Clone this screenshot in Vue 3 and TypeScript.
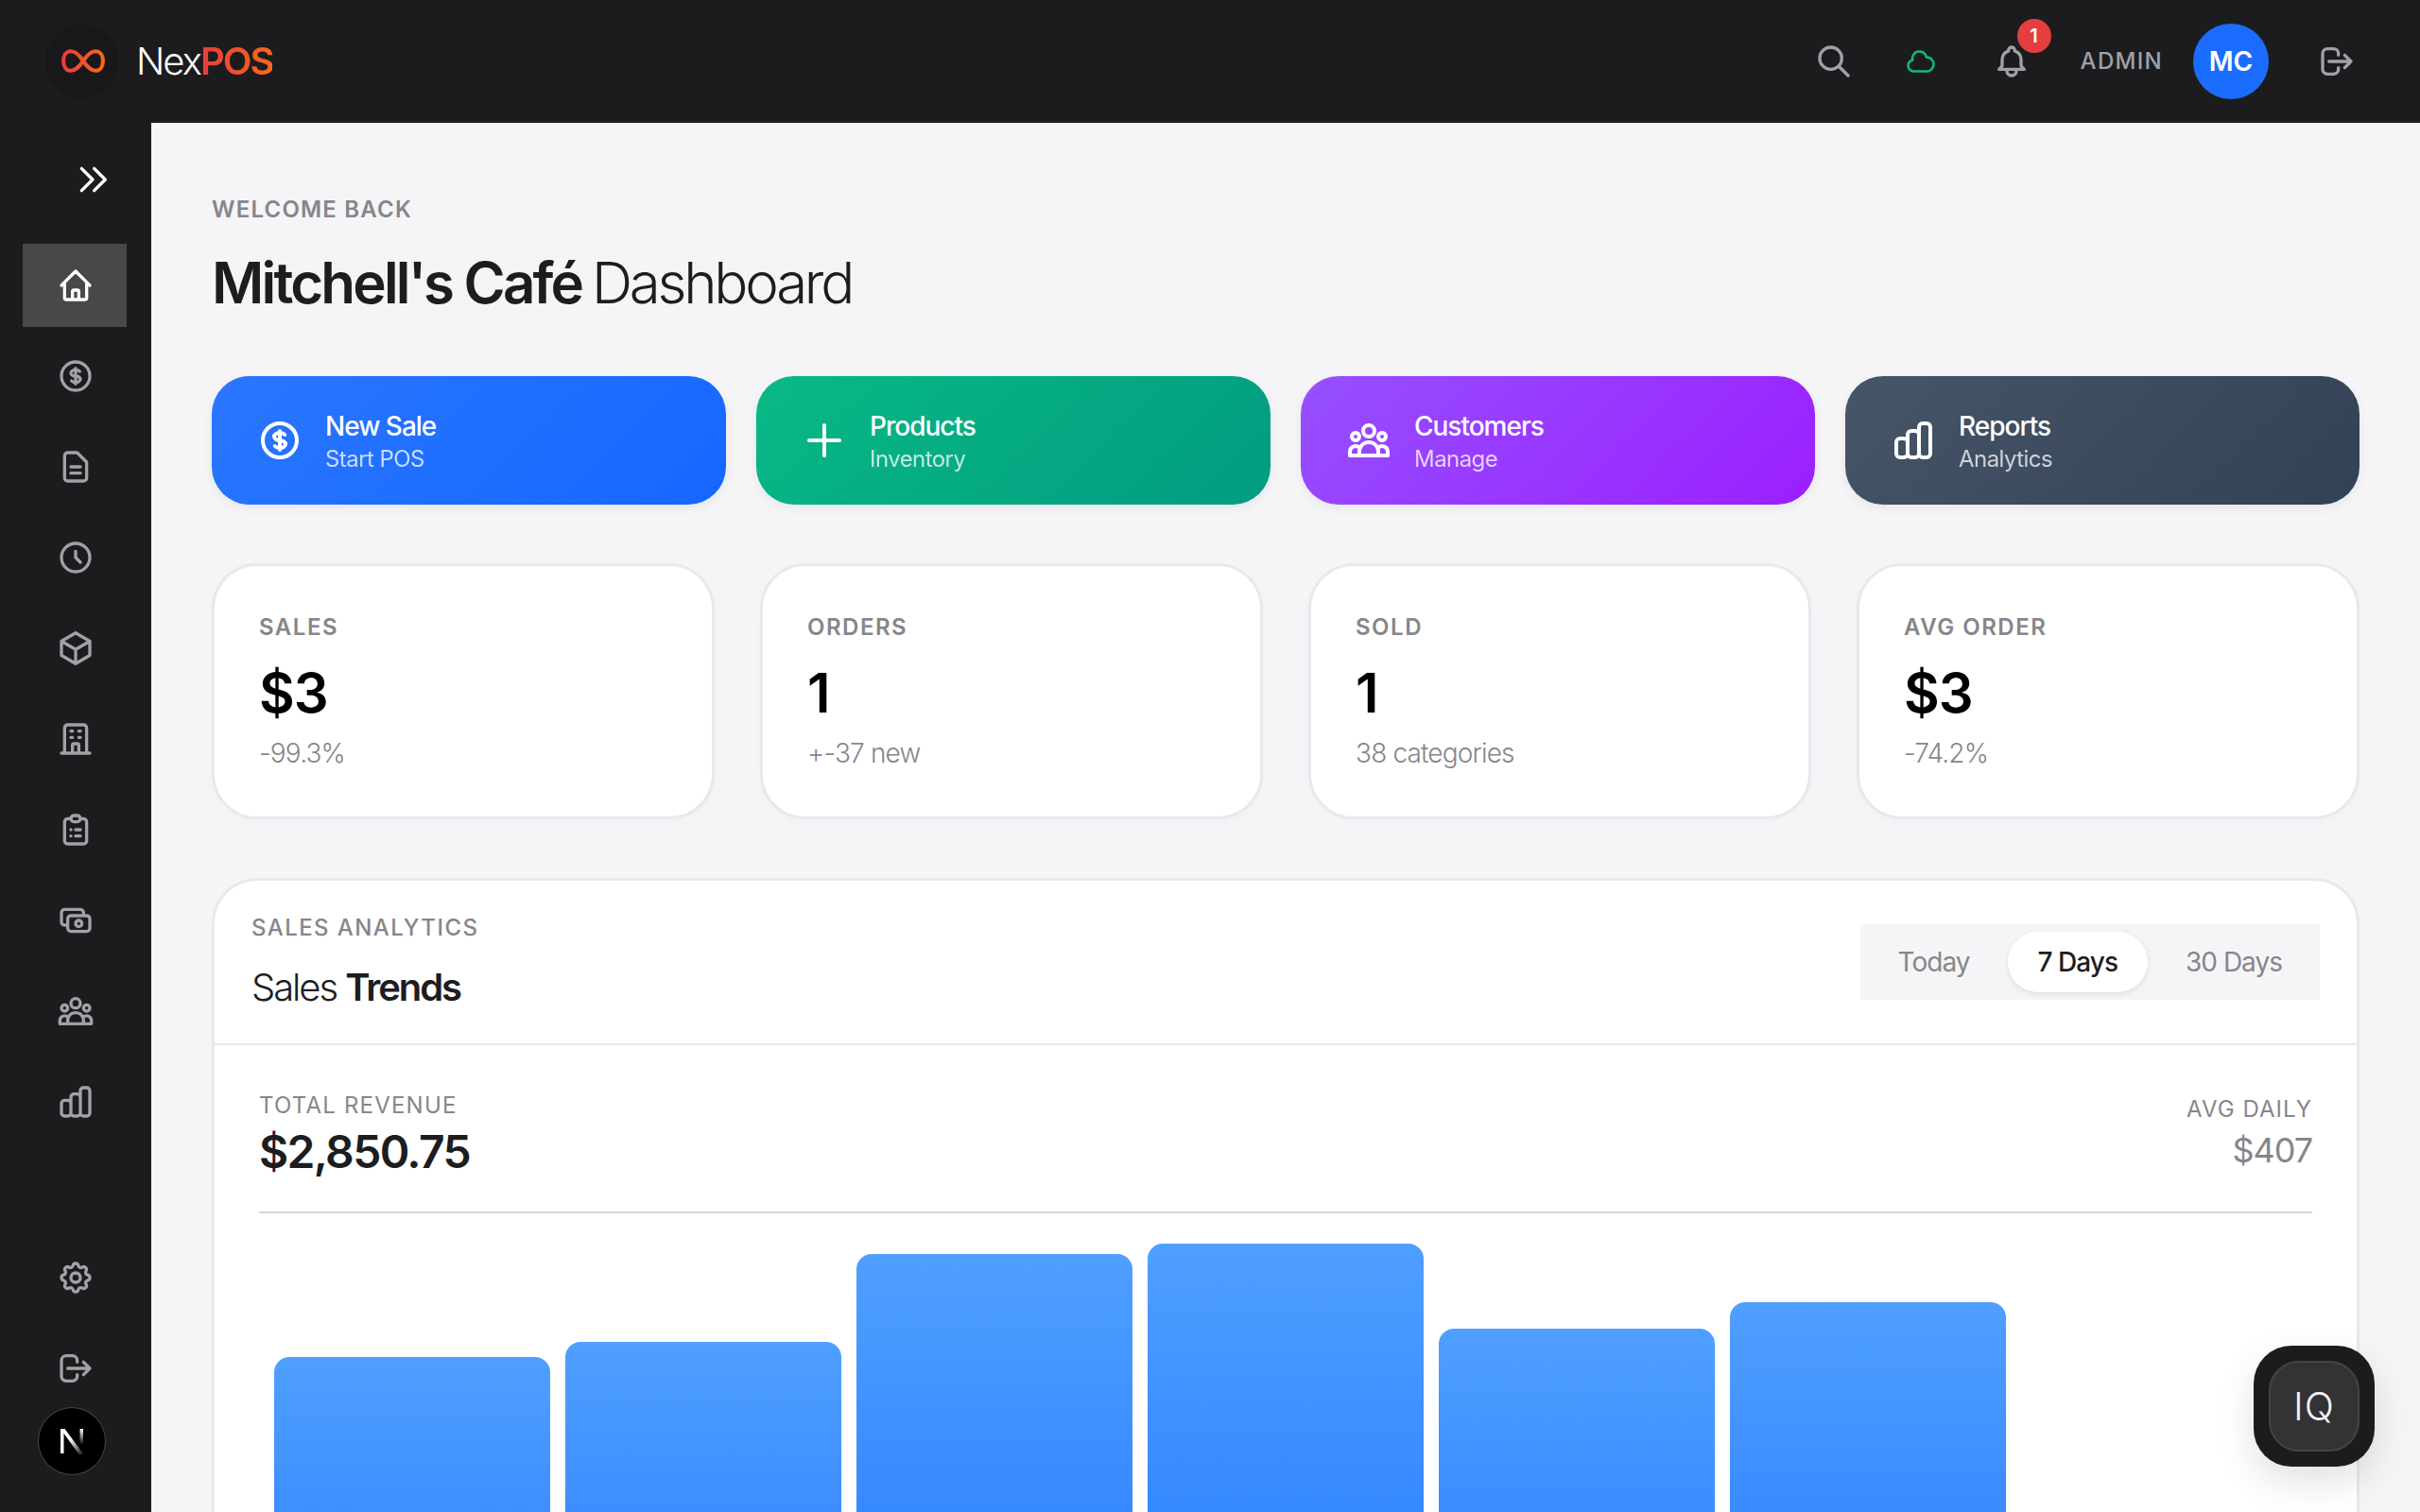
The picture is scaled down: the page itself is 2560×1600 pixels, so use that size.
<script setup lang="ts">
interface NavItem { id: string; paths: string[]; active?: boolean }
const ic = {
  home: 'M3 12l2-2m0 0l7-7 7 7M5 10v10a1 1 0 001 1h3m10-11l2 2m-2-2v10a1 1 0 01-1 1h-3m-6 0a1 1 0 001-1v-4a1 1 0 011-1h2a1 1 0 011 1v4a1 1 0 001 1m-6 0h6',
  dollar: 'M12 8c-1.657 0-3 .895-3 2s1.343 2 3 2 3 .895 3 2-1.343 2-3 2m0-8c1.11 0 2.08.402 2.599 1M12 8V7m0 1v8m0 0v1m0-1c-1.11 0-2.08-.402-2.599-1M21 12a9 9 0 11-18 0 9 9 0 0118 0z',
  doc: 'M9 12h6m-6 4h6m2 5H7a2 2 0 01-2-2V5a2 2 0 012-2h5.586a1 1 0 01.707.293l5.414 5.414a1 1 0 01.293.707V19a2 2 0 01-2 2z',
  clock: 'M12 8v4l3 3m6-3a9 9 0 11-18 0 9 9 0 0118 0z',
  cube: 'M21 7.5l-9-5.25L3 7.5m18 0l-9 5.25m9-5.25v9l-9 5.25M3 7.5l9 5.25M3 7.5v9l9 5.25m0-9v9',
  building: 'M19 21V5a2 2 0 00-2-2H7a2 2 0 00-2 2v16m14 0h2m-2 0h-5m-9 0H3m2 0h5M9 7h1m-1 4h1m4-4h1m-1 4h1m-5 10v-5a1 1 0 011-1h2a1 1 0 011 1v5m-4 0h4',
  clipboard: 'M9 5H7a2 2 0 00-2 2v12a2 2 0 002 2h10a2 2 0 002-2V7a2 2 0 00-2-2h-2M9 5a2 2 0 002 2h2a2 2 0 002-2M9 5a2 2 0 012-2h2a2 2 0 012 2m-3 7h3m-3 4h3m-6-4h.01M9 16h.01',
  cash: 'M17 9V7a2 2 0 00-2-2H5a2 2 0 00-2 2v6a2 2 0 002 2h2m2 4h10a2 2 0 002-2v-6a2 2 0 00-2-2H9a2 2 0 00-2 2v6a2 2 0 002 2zm7-5a2 2 0 11-4 0 2 2 0 014 0z',
  users: 'M17 20h5v-2a3 3 0 00-5.356-1.857M17 20H7m10 0v-2c0-.656-.126-1.283-.356-1.857M7 20H2v-2a3 3 0 015.356-1.857M7 20v-2c0-.656.126-1.283.356-1.857m0 0a5.002 5.002 0 019.288 0M15 7a3 3 0 11-6 0 3 3 0 016 0zm6 3a2 2 0 11-4 0 2 2 0 014 0zM7 10a2 2 0 11-4 0 2 2 0 014 0z',
  chart: 'M9 19v-6a2 2 0 00-2-2H5a2 2 0 00-2 2v6a2 2 0 002 2h2a2 2 0 002-2zm0 0V9a2 2 0 012-2h2a2 2 0 012 2v10m-6 0a2 2 0 002 2h2a2 2 0 002-2m0 0V5a2 2 0 012-2h2a2 2 0 012 2v14a2 2 0 01-2 2h-2a2 2 0 01-2-2z',
  cog: 'M10.325 4.317c.426-1.756 2.924-1.756 3.35 0a1.724 1.724 0 002.573 1.066c1.543-.94 3.31.826 2.37 2.37a1.724 1.724 0 001.065 2.572c1.756.426 1.756 2.924 0 3.35a1.724 1.724 0 00-1.066 2.573c.94 1.543-.826 3.31-2.37 2.37a1.724 1.724 0 00-2.572 1.065c-.426 1.756-2.924 1.756-3.35 0a1.724 1.724 0 00-2.573-1.066c-1.543.94-3.31-.826-2.37-2.37a1.724 1.724 0 00-1.065-2.572c-1.756-.426-1.756-2.924 0-3.35a1.724 1.724 0 001.066-2.573c-.94-1.543.826-3.31 2.37-2.37.996.608 2.296.07 2.572-1.065zM15 12a3 3 0 11-6 0 3 3 0 016 0z',
  logout: 'M17 16l4-4m0 0l-4-4m4 4H7m6 4v1a3 3 0 01-3 3H6a3 3 0 01-3-3V7a3 3 0 013-3h4a3 3 0 013 3v1',
  search: 'M21 21l-6-6m2-5a7 7 0 11-14 0 7 7 0 0114 0z',
  cloud: 'M3 15a4 4 0 004 4h9a5 5 0 10-.1-9.999 5.002 5.002 0 10-9.78 2.096A4.001 4.001 0 003 15z',
  bell: 'M15 17h5l-1.405-1.405A2.032 2.032 0 0118 14.158V11a6.002 6.002 0 00-4-5.659V5a2 2 0 10-4 0v.341C7.67 6.165 6 8.388 6 11v3.159c0 .538-.214 1.055-.595 1.436L4 17h5m6 0v1a3 3 0 11-6 0v-1m6 0H9',
  plus: 'M12 4v16m8-8H4',
  chevrons: 'M13 5l7 7-7 7M5 5l7 7-7 7',
}
const nav: NavItem[] = [
  { id: 'home', paths: [ic.home], active: true },
  { id: 'sales', paths: [ic.dollar] },
  { id: 'docs', paths: [ic.doc] },
  { id: 'history', paths: [ic.clock] },
  { id: 'products', paths: [ic.cube] },
  { id: 'branches', paths: [ic.building] },
  { id: 'orders', paths: [ic.clipboard] },
  { id: 'cash', paths: [ic.cash] },
  { id: 'customers', paths: [ic.users] },
  { id: 'reports', paths: [ic.chart] },
]
const navBottom: NavItem[] = [
  { id: 'settings', paths: [ic.cog] },
  { id: 'logout', paths: [ic.logout] },
]
const actions = [
  { title: 'New Sale', sub: 'Start POS', icon: ic.dollar, cls: 'blue' },
  { title: 'Products', sub: 'Inventory', icon: ic.plus, cls: 'green' },
  { title: 'Customers', sub: 'Manage', icon: ic.users, cls: 'purple' },
  { title: 'Reports', sub: 'Analytics', icon: ic.chart, cls: 'slate' },
]
const stats = [
  { label: 'SALES', value: '$3', sub: '-99.3%' },
  { label: 'ORDERS', value: '1', sub: '+-37 new' },
  { label: 'SOLD', value: '1', sub: '38 categories' },
  { label: 'AVG ORDER', value: '$3', sub: '-74.2%' },
]
const tabs = ['Today', '7 Days', '30 Days']
const bars: number[] = [488, 504, 597, 608, 518, 546, 0]
</script>

<template>
  <div class="app">
    <header class="topbar">
      <div class="brand">
        <div class="logo">
          <svg viewBox="0 0 78 78" width="78" height="78" fill="none">
            <defs>
              <linearGradient id="inf" x1="0" y1="0" x2="1" y2="0">
                <stop offset="0" stop-color="#e53e3e" />
                <stop offset="1" stop-color="#f9671a" />
              </linearGradient>
            </defs>
            <path transform="translate(40 38.500) scale(.93) translate(-40 -38.500)" d="M40 38.500C35 31 30.500 27.500 26 27.500c-5.500 0-8.500 5-8.500 11s3 11 8.500 11c4.500 0 9-3.500 14-11 5-7.500 9.500-11 14-11 5.500 0 8.500 5 8.500 11s-3 11-8.500 11c-4.500 0-9-3.500-14-11z" stroke="url(#inf)" stroke-width="4.400" />
          </svg>
        </div>
        <div class="wordmark"><span class="nex">Nex</span><span class="pos">POS</span></div>
      </div>
      <div class="top-actions">
        <svg class="ti search" viewBox="0 0 24 24"><path :d="ic.search" /></svg>
        <svg class="ti cloud" viewBox="0 0 24 24"><path :d="ic.cloud" /></svg>
        <div class="bell">
          <svg class="ti" viewBox="0 0 24 24"><path :d="ic.bell" /></svg>
          <span class="badge">1</span>
        </div>
        <span class="role">ADMIN</span>
        <div class="avatar">MC</div>
        <svg class="ti exit" viewBox="0 0 24 24"><path :d="ic.logout" /></svg>
      </div>
    </header>

    <div class="body">
      <aside class="sidebar">
        <div class="toggle">
          <svg class="ni white" viewBox="0 0 24 24"><path :d="ic.chevrons" /></svg>
        </div>
        <nav class="nav">
          <div v-for="n in nav" :key="n.id" class="nav-item" :class="{ active: n.active }">
            <svg class="ni" viewBox="0 0 24 24"><path v-for="p in n.paths" :key="p" :d="p" /></svg>
          </div>
        </nav>
        <nav class="nav nav-bottom">
          <div v-for="n in navBottom" :key="n.id" class="nav-item">
            <svg class="ni" viewBox="0 0 24 24"><path v-for="p in n.paths" :key="p" :d="p" /></svg>
          </div>
        </nav>
      </aside>

      <main class="main">
        <div class="welcome">WELCOME BACK</div>
        <h1 class="title"><strong>Mitchell's Café</strong> Dashboard</h1>

        <section class="actions">
          <div v-for="a in actions" :key="a.title" class="action" :class="a.cls">
            <svg class="ai" viewBox="0 0 24 24"><path :d="a.icon" /></svg>
            <div class="action-text">
              <div class="action-title">{{ a.title }}</div>
              <div class="action-sub">{{ a.sub }}</div>
            </div>
          </div>
        </section>

        <section class="stats">
          <div v-for="s in stats" :key="s.label" class="stat">
            <div class="stat-label">{{ s.label }}</div>
            <div class="stat-value">{{ s.value }}</div>
            <div class="stat-sub">{{ s.sub }}</div>
          </div>
        </section>

        <section class="panel">
          <div class="panel-head">
            <div>
              <div class="panel-eyebrow">SALES ANALYTICS</div>
              <div class="panel-title">Sales <strong>Trends</strong></div>
            </div>
            <div class="tabs">
              <div v-for="t in tabs" :key="t" class="tab" :class="{ on: t === '7 Days' }">{{ t }}</div>
            </div>
          </div>
          <div class="panel-body">
            <div class="totals">
              <div>
                <div class="tot-label">TOTAL REVENUE</div>
                <div class="tot-value">$2,850.75</div>
              </div>
              <div class="avg">
                <div class="avg-label">AVG DAILY</div>
                <div class="avg-value">$407</div>
              </div>
            </div>
            <div class="chart">
              <div class="col" v-for="(b, i) in bars" :key="i">
                <div v-if="b" class="bar" :style="{ height: b + 'px' }"></div>
              </div>
            </div>
          </div>
        </section>
      </main>
    </div>

    <div class="next-badge">
      <svg viewBox="0 0 70 70" width="70" height="70" fill="none">
        <defs>
          <linearGradient id="nd" x1="24" y1="22" x2="48" y2="50" gradientUnits="userSpaceOnUse">
            <stop offset="0.4" stop-color="#fff" />
            <stop offset="1" stop-color="#fff" stop-opacity="0" />
          </linearGradient>
          <linearGradient id="nr" x1="0" y1="0" x2="0" y2="1">
            <stop offset="0" stop-color="#fff" />
            <stop offset="1" stop-color="#fff" stop-opacity="0" />
          </linearGradient>
        </defs>
        <rect x="23" y="22" width="3.500" height="26" fill="#fff" />
        <path d="M23 22h4.500l20 27h-5z" fill="url(#nd)" />
        <rect x="43.500" y="22" width="3.500" height="17" fill="url(#nr)" />
      </svg>
    </div>

    <button class="iq">
      <span class="iq-inner">IQ</span>
    </button>
  </div>
</template>

<style>
html, body { margin: 0; background: #f5f5f7; }
</style>

<style scoped>
.app {
  width: 2560px;
  height: 1600px;
  overflow: hidden;
  display: flex;
  flex-direction: column;
  position: relative;
  font-family: Inter, "Liberation Sans", sans-serif;
  color: #1d1d1f;
  background: #f5f5f7;
}
.topbar {
  height: 130px;
  flex: none;
  background: #1c1c1e;
  display: flex;
  align-items: center;
  justify-content: space-between;
  padding: 0 68px 0 48px;
}
.brand { display: flex; align-items: center; gap: 18px; }
.logo { width: 78px; height: 78px; border-radius: 50%; background: #18181a; }
.logo svg { display: block; }
.wordmark { font-size: 40px; letter-spacing: -0.05em; line-height: 1; }
.nex { font-weight: 300; color: #fff; }
.pos {
  font-weight: 600;
  background: linear-gradient(90deg, #e53e3e, #f9671a);
  -webkit-background-clip: text;
  background-clip: text;
  color: transparent;
}
.top-actions { display: flex; align-items: center; }
.ti { width: 40px; height: 40px; fill: none; stroke: #a1a1a6; stroke-width: 2; stroke-linecap: round; stroke-linejoin: round; display: block; }
.cloud { width: 36px; height: 36px; stroke: #10b981; stroke-width: 1.700; margin-left: 54px; }
.bell { position: relative; margin-left: 58px; height: 40px; }
.badge {
  position: absolute;
  top: -25px;
  left: 26px;
  width: 36px;
  height: 36px;
  border-radius: 50%;
  background: #e53e3e;
  color: #fff;
  font-size: 20px;
  font-weight: 600;
  display: flex;
  align-items: center;
  justify-content: center;
}
.role { margin-left: 53px; margin-bottom: 2px; font-size: 24px; font-weight: 500; letter-spacing: 1.3px; color: #a1a1a6; }
.avatar {
  margin-left: 32px;
  width: 80px;
  height: 80px;
  border-radius: 50%;
  background: #1a6dff;
  color: #fff;
  font-size: 28px;
  font-weight: 600;
  display: flex;
  align-items: center;
  justify-content: center;
}
.exit { margin-left: 52px; }

.body { flex: 1; display: flex; min-height: 0; }
.sidebar {
  width: 160px;
  flex: none;
  background: #1c1c1e;
  padding: 40px 0 108px;
  box-sizing: border-box;
  display: flex;
  flex-direction: column;
}
.toggle { padding-left: 78px; height: 40px; margin-bottom: 48px; }
.nav { display: flex; flex-direction: column; gap: 8px; }
.nav-bottom { margin-top: auto; }
.nav-item {
  width: 110px;
  height: 88px;
  margin-left: 24px;
  padding-left: 36px;
  box-sizing: border-box;
  display: flex;
  align-items: center;
}
.nav-item.active { background: #48484a; }
.ni { width: 40px; height: 40px; fill: none; stroke: #a1a1a6; stroke-width: 2; stroke-linecap: round; stroke-linejoin: round; display: block; }
.nav-item.active .ni, .ni.white { stroke: #fff; }

.main { flex: 1; min-width: 0; padding: 74px 64px 0; box-sizing: border-box; }
.welcome { font-size: 24px; line-height: 36px; font-weight: 600; letter-spacing: 1.2px; color: #86868b; }
.title { margin: 23px 0 63px; font-size: 60px; line-height: 72px; font-weight: 300; letter-spacing: -0.054em; color: #1d1d1f; }
.title strong { font-weight: 600; letter-spacing: -0.047em; margin-right: -3px; }

.actions { display: grid; grid-template-columns: repeat(4, 1fr); gap: 32px; }
.action {
  height: 136px;
  border-radius: 40px;
  padding-left: 48px;
  display: flex;
  align-items: center;
  gap: 24px;
  color: #fff;
  box-shadow: 0 4px 12px rgba(0, 0, 0, 0.06);
}
.blue { background: linear-gradient(135deg, #2b76ff, #1467ff); }
.green { background: linear-gradient(135deg, #08b985, #019c80); }
.purple { background: linear-gradient(135deg, #9650ff, #9b1fff); }
.slate { background: linear-gradient(135deg, #475569, #334155); }
.ai { width: 48px; height: 48px; fill: none; stroke: #fff; stroke-width: 2; stroke-linecap: round; stroke-linejoin: round; flex: none; }
.action-text { padding-top: 3px; }
.action-title { font-size: 28px; line-height: 36px; font-weight: 500; letter-spacing: -0.036em; }
.action-sub { font-size: 24px; line-height: 32px; margin-top: 1px; opacity: 0.75; font-weight: 400; letter-spacing: -0.023em; }

.stats { display: grid; grid-template-columns: repeat(4, 1fr); gap: 48px; margin-top: 62px; }
.stat {
  background: #fff;
  border: 3px solid #e8e8ed;
  border-radius: 48px;
  padding: 50px 48px 49px 47px;
  box-shadow: 0 4px 12px rgba(0, 0, 0, 0.02);
}
.stat-label { font-size: 24px; line-height: 30px; font-weight: 600; letter-spacing: 1.500px; color: #86868b; }
.stat-value { margin-top: 22px; font-size: 58px; line-height: 64px; font-weight: 600; letter-spacing: -1px; color: #000; }
.stat-sub { margin-top: 14px; font-size: 28px; line-height: 36px; font-weight: 300; letter-spacing: -0.03em; color: #86868b; }

.panel {
  margin-top: 62px;
  background: #fff;
  border: 3px solid #e8e8ed;
  border-bottom: 0;
  border-radius: 48px 48px 0 0;
  height: 800px;
}
.panel-head {
  height: 172px;
  padding: 0 39px;
  border-bottom: 2px solid #e8e8ed;
  display: flex;
  align-items: center;
  justify-content: space-between;
}
.panel-eyebrow { font-size: 24px; line-height: 30px; font-weight: 500; letter-spacing: 1.4px; color: #86868b; }
.panel-title { margin-top: 24px; font-size: 40px; line-height: 48px; font-weight: 300; letter-spacing: -0.052em; color: #1d1d1f; }
.panel-title strong { font-weight: 600; }
.tabs { display: flex; gap: 8px; padding: 8px; background: #f5f5f7; }
.tab { padding: 0 32px; height: 64px; display: flex; align-items: center; font-size: 28px; font-weight: 400; letter-spacing: -0.035em; color: #86868b; border-radius: 32px; }
.tab.on { background: #fff; color: #1d1d1f; font-weight: 500; box-shadow: 0 2px 6px rgba(0, 0, 0, 0.1); }

.panel-body { padding: 49px 47px 0; }
.totals {
  display: flex;
  justify-content: space-between;
  align-items: flex-start;
  padding-bottom: 35px;
  border-bottom: 2px solid #d8d8dc;
}
.tot-label { font-size: 24px; line-height: 30px; font-weight: 400; letter-spacing: 1.2px; color: #86868b; }
.tot-value { margin-top: 6px; font-size: 48px; line-height: 56px; font-weight: 600; letter-spacing: -0.035em; color: #1d1d1f; }
.avg { text-align: right; }
.avg-label { margin-top: 4px; font-size: 24px; line-height: 30px; font-weight: 400; letter-spacing: 1px; color: #86868b; }
.avg-value { margin-top: 4px; font-size: 36px; line-height: 48px; font-weight: 400; letter-spacing: -0.03em; color: #86868b; }

.chart { height: 640px; padding: 0 16px; display: grid; grid-template-columns: repeat(7, 1fr); gap: 16px; align-items: end; }
.bar { border-radius: 16px 16px 0 0; background: linear-gradient(180deg, #4f9fff, #1a6fff); }

.next-badge {
  position: absolute;
  left: 41px;
  bottom: 40px;
  width: 70px;
  height: 70px;
  border-radius: 50%;
  background: #000;
  box-shadow: 0 0 0 1px #444;
}
.next-badge svg { display: block; }
.iq {
  position: absolute;
  right: 48px;
  bottom: 48px;
  width: 128px;
  height: 128px;
  padding: 0;
  border: 0;
  border-radius: 40px;
  background: #1c1c1e;
  display: flex;
  align-items: center;
  justify-content: center;
  box-shadow: 0 16px 40px rgba(0, 0, 0, 0.12);
}
.iq-inner {
  width: 96px;
  height: 96px;
  box-sizing: border-box;
  border: 2px solid #444;
  border-radius: 32px;
  background: #333335;
  color: #f2f2f2;
  font-family: Inter, sans-serif;
  font-size: 41px;
  font-weight: 300;
  letter-spacing: 1px;
  display: flex;
  align-items: center;
  justify-content: center;
}
</style>
